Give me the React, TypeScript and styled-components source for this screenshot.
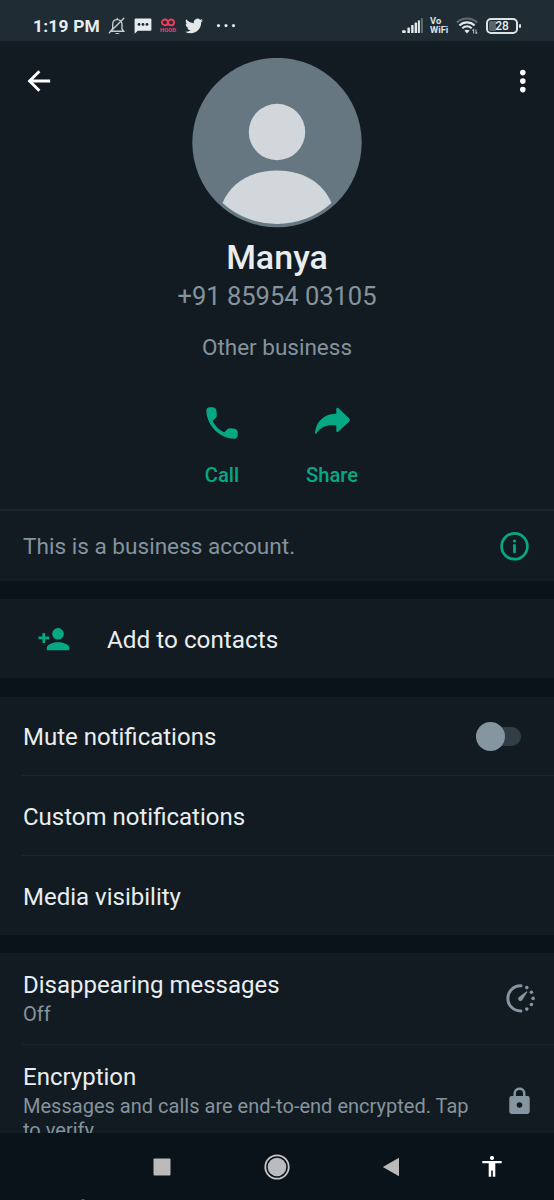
import React from "react";
import styled, { createGlobalStyle } from "styled-components";

const Global = createGlobalStyle`
  * { box-sizing: border-box; }
  html, body { margin: 0; padding: 0; background: #0b131a; }
  body { font-family: Roboto, "Liberation Sans", sans-serif; color: #e9edef; }
  svg { display: block; flex: none; }
`;

const Screen = styled.div`
  width: 554px;
  height: 1200px;
  overflow: hidden;
  display: flex;
  flex-direction: column;
  background: #0b131a;
`;

const StatusBar = styled.header`
  flex: none;
  height: 41px;
  padding: 10px 36px 0 33px;
  display: flex;
  align-items: center;
  background: #1f2c34;
`;

const Clock = styled.span`
  width: 68px;
  margin-right: 7px;
  font-size: 17.4px;
  line-height: 20px;
  font-weight: 700;
  letter-spacing: 0.2px;
  white-space: nowrap;
  color: #e8ecee;
`;

const StatusIcons = styled.div`
  display: flex;
  align-items: center;
  gap: 7.5px;
`;

const Hood = styled.span`
  width: 18px;
  display: flex;
  flex-direction: column;
  align-items: center;
  font-size: 5.8px;
  line-height: 6px;
  font-weight: 900;
  color: #e83e5c;
`;

const SystemIcons = styled(StatusIcons)`
  margin-left: auto;
  gap: 7px;
`;

const VoWifi = styled.span`
  width: 19px;
  font-size: 9.4px;
  line-height: 8.5px;
  font-weight: 700;
  white-space: nowrap;
  color: #dde2e5;
`;

const Battery = styled.span`
  width: 32px;
  height: 16px;
  margin-left: 1px;
  padding: 1px;
  border: 2px solid #dde2e5;
  border-radius: 5px;
  display: flex;
  align-items: center;
  justify-content: center;
  font-size: 12px;
  font-weight: 500;
  line-height: 10px;
  background: linear-gradient(90deg, #59646a 0 7px, transparent 7px) content-box;
  position: relative;
  &::after {
    content: "";
    position: absolute;
    right: -5px;
    top: 4px;
    width: 2px;
    height: 4px;
    border-radius: 1px;
    background: #dde2e5;
  }
`;

const Content = styled.main`
  flex: none;
  height: 1092px;
  overflow: hidden;
`;

const Profile = styled.section`
  height: 470px;
  display: grid;
  grid-template-columns: 78px 1fr 78px;
  background: #121b22;
  border-bottom: 2px solid #19232a;
`;

const IconButton = styled.button<{ $end?: boolean }>`
  height: 79px;
  padding: ${(p) => (p.$end ? "0 28px 0 0" : "0 0 0 27px")};
  display: flex;
  align-items: center;
  justify-content: ${(p) => (p.$end ? "flex-end" : "flex-start")};
  border: 0;
  background: none;
`;

const Identity = styled.div`
  padding-top: 17px;
  display: flex;
  flex-direction: column;
  align-items: center;
`;

const Name = styled.h1`
  margin: 9px 0 0;
  font-size: 34px;
  line-height: 40px;
  font-weight: 500;
`;

const Phone = styled.div`
  margin-top: 4px;
  font-size: 25.5px;
  line-height: 30px;
  color: #85939c;
`;

const Category = styled.div`
  margin-top: 22px;
  font-size: 22.5px;
  line-height: 28px;
  color: #85939c;
`;

const Actions = styled.div`
  margin-top: 40.5px;
  display: grid;
  grid-template-columns: 110px 110px;
`;

const Action = styled.button`
  padding: 0;
  border: 0;
  background: none;
  display: flex;
  flex-direction: column;
  align-items: center;
  gap: 19px;
  font: 500 20.2px/24px Roboto, sans-serif;
  color: #06a884;
`;

const Panel = styled.section<{ $gap?: number }>`
  margin-bottom: ${(p) => p.$gap ?? 18}px;
  background: #121b22;
`;

const Row = styled.div<{ $height: number; $divided?: boolean; $right?: number }>`
  height: ${(p) => p.$height}px;
  margin-left: ${(p) => (p.$divided ? 22 : 0)}px;
  padding: 2px ${(p) => p.$right ?? 0}px 0 ${(p) => (p.$divided ? 1 : 23)}px;
  border-top: ${(p) => (p.$divided ? "1px solid #1c262d" : "0")};
  display: flex;
  align-items: center;
  justify-content: space-between;
`;

const ContactRow = styled(Row)`
  justify-content: flex-start;
  gap: 37px;
  padding-left: 38px;
  font-size: 24.3px;
`;

const DetailRow = styled(Row)`
  align-items: flex-start;
  padding-top: 17px;
`;

const Label = styled.div`
  font-size: 24px;
  line-height: 30px;
  white-space: nowrap;
  ${ContactRow} & { font-size: inherit; }
`;

const Notice = styled(Label)`
  font-size: 22.6px;
  color: #85939c;
`;

const Detail = styled.div`
  margin-top: 2px;
  width: 452px;
  font-size: 20.05px;
  line-height: 24px;
  color: #85939c;
`;

const Toggle = styled.span`
  width: 45px;
  height: 29px;
  margin-bottom: 2px;
  display: flex;
  align-items: center;
  position: relative;
  &::before {
    content: "";
    position: absolute;
    right: 0;
    top: 5px;
    width: 35px;
    height: 19px;
    border-radius: 10px;
    background: #323e46;
  }
`;

const Knob = styled.span`
  position: relative;
  width: 29px;
  height: 29px;
  border-radius: 50%;
  background: #8696a0;
`;

const IconSlot = styled.span<{ $top: number }>`
  padding-top: ${(p) => p.$top}px;
`;

const NavBar = styled.nav`
  flex: none;
  height: 63px;
  padding: 4px 16px 0 105px;
  display: grid;
  grid-template-columns: 114px 116px 111px 1fr;
  align-items: center;
  justify-items: center;
`;

const NextLine = styled(Detail)`
  flex: none;
  height: 4px;
  margin: 0 0 0 23px;
  overflow: hidden;
`;

const muted = "#8696a0";
const green = "#06a884";

const Bell = () => (
  <svg width="18" height="18" viewBox="0 0 18 18" fill="none" stroke="#c4cacd" strokeWidth="1.4" strokeLinecap="round">
    <path d="M2.5 14.3H15.7L14 12V7.3C14 4.6 12.2 2.6 9.3 2.6S4.7 4.6 4.7 7.3V11.6L2.5 14.3M9.3 2.4V1.4M1.3 15.7L15.8 1.2" />
    <path d="M7 16h4.6c-.6 1.3-3.8 1.3-4.6 0Z" fill="#c4cacd" stroke="none" />
  </svg>
);

const Chat = () => (
  <svg width="18" height="17" viewBox="0 0 18 17">
    <path d="M1.6 1.4H16.4Q17.4 1.4 17.4 2.4V12.8Q17.4 13.8 16.4 13.8H3.8L.6 16.8V2.4Q.6 1.4 1.6 1.4Z" fill="#e8ecee" />
    <g fill="#1f2c34"><circle cx="5" cy="7.4" r="1.4" /><circle cx="9" cy="7.4" r="1.4" /><circle cx="13" cy="7.4" r="1.4" /></g>
  </svg>
);

const Twitter = () => (
  <svg width="18" height="18" viewBox="0 0 24 24" fill="#e2e7e9">
    <path d="M23.95 4.57a10 10 0 0 1-2.82.78 4.96 4.96 0 0 0 2.16-2.73c-.95.56-2 .96-3.13 1.19a4.92 4.92 0 0 0-8.38 4.48C7.69 8.1 4.07 6.13 1.64 3.16a4.82 4.82 0 0 0-.67 2.48c0 1.71.87 3.21 2.19 4.1a4.9 4.9 0 0 1-2.23-.62v.06a4.92 4.92 0 0 0 3.95 4.83 5 5 0 0 1-2.21.08 4.94 4.94 0 0 0 4.6 3.42A9.87 9.87 0 0 1 0 19.54a13.99 13.99 0 0 0 7.56 2.21c9.05 0 14-7.5 14-13.98 0-.21 0-.42-.02-.63a9.94 9.94 0 0 0 2.41-2.57Z" />
  </svg>
);

const Signal = () => (
  <svg width="21" height="15" viewBox="0 0 21 15" fill="#e2e7e9">
    <rect x="0" y="12.2" width="3.8" height="2.8" rx="1" /><rect x="5.4" y="9.5" width="2.5" height="5.5" rx=".6" />
    <rect x="9.1" y="7" width="2.5" height="8" rx=".6" /><rect x="12.6" y="4.5" width="2.5" height="10.5" rx=".6" />
    <rect x="15.9" y="2.2" width="2" height="12.8" rx=".6" /><rect x="18.9" y="0" width="2" height="15" rx=".6" fill="#626d73" />
  </svg>
);

const Wifi = () => (
  <svg width="22" height="17" viewBox="0 0 22 17" fill="none" strokeWidth="2.1">
    <path d="M.9 5.5C6.5.1 15.5.1 21.1 5.5" stroke="#626d73" />
    <path d="M3.4 8.4C7.8 4.3 14.2 4.3 18.6 8.4M6.3 11.3C9.2 8.8 12.8 8.8 15.7 11.3" stroke="#e2e7e9" />
    <path d="M8.4 13.6C10 12.3 12 12.3 13.6 13.6L11 16.4Z" fill="#e2e7e9" />
    <path d="M17.6 16.5V12.5L16.4 13.7M20 12.5V16.5L21.2 15.3" stroke="#aeb6ba" strokeWidth="1.1" />
  </svg>
);

const Avatar = () => (
  <svg width="170" height="170" viewBox="0 0 170 170">
    <circle cx="85" cy="84.6" r="84.7" fill="#667781" />
    <g fill="#d1d7db">
      <circle cx="85" cy="74" r="28.2" />
      <path d="M30.5 145C39 124 60 112.4 85 112.4S131 124 139.5 145A81.2 81.2 0 0 1 30.5 145Z" />
    </g>
  </svg>
);

export default function App() {
  return (
    <Screen>
      <Global />
      <StatusBar>
        <Clock>1:19 PM</Clock>
        <StatusIcons>
          <Bell />
          <Chat />
          <Hood>
            <svg width="14" height="9" viewBox="0 0 14 9" fill="none" stroke="#e83e5c" strokeWidth="1.9">
              <circle cx="3.9" cy="4.4" r="2.9" /><circle cx="10.1" cy="4.4" r="2.9" />
            </svg>
            HOOD
          </Hood>
          <Twitter />
          <svg width="32" height="4" viewBox="0 0 32 4" fill="#e2e7e9">
            <circle cx="8.5" cy="1.6" r="1.6" /><circle cx="16" cy="1.6" r="1.6" /><circle cx="23.5" cy="1.6" r="1.6" />
          </svg>
        </StatusIcons>
        <SystemIcons>
          <Signal />
          <VoWifi>Vo<br />WiFi</VoWifi>
          <Wifi />
          <Battery>28</Battery>
        </SystemIcons>
      </StatusBar>
      <Content>
        <Profile>
          <IconButton aria-label="Back">
            <svg width="24" height="24" viewBox="0 0 24 24" fill="none" stroke="#fff" strokeWidth="2.9">
              <path d="M23.2 12H3M12.4 2.2L2.6 12L12.4 21.8" />
            </svg>
          </IconButton>
          <Identity>
            <Avatar />
            <Name>Manya</Name>
            <Phone>+91 85954 03105</Phone>
            <Category>Other business</Category>
            <Actions>
              <Action>
                <svg width="42" height="42" viewBox="0 0 24 24" fill={green}>
                  <path d="M19.23 15.26l-2.54-.29c-.61-.07-1.21.14-1.64.57l-1.84 1.84c-2.83-1.44-5.15-3.75-6.59-6.59l1.85-1.85c.43-.43.64-1.03.57-1.64l-.29-2.52c-.12-1.01-.97-1.77-1.99-1.77H5.03c-1.13 0-2.07.94-2 2.07.53 8.54 7.36 15.36 15.89 15.89 1.13.07 2.07-.87 2.07-2v-1.73c.01-1.01-.75-1.86-1.76-1.98z" />
                </svg>
                Call
              </Action>
              <Action>
                <svg width="42" height="42" viewBox="-3 -4 42 42" fill={green}>
                  <path d="M22.3 2.8Q22.5 1 24.2 2L35.3 12.6Q36.6 14 35.3 15.4L24.2 25.7Q22.5 26.9 22.3 25V19.4C14 18.9 7.5 20 2.6 27.2Q1 28.8 1 27C2 17.5 8 8.2 22.3 7.8Z" />
                </svg>
                Share
              </Action>
            </Actions>
          </Identity>
          <IconButton $end aria-label="More options">
            <svg width="6" height="24" viewBox="0 0 6 24" fill="#fff">
              <circle cx="2.8" cy="3.6" r="2.8" /><circle cx="2.8" cy="12.1" r="2.8" /><circle cx="2.8" cy="20.6" r="2.8" />
            </svg>
          </IconButton>
        </Profile>
        <Panel>
          <Row $height={70} $right={25}>
            <Notice>This is a business account.</Notice>
            <svg width="29" height="30" viewBox="0 -1 29 30">
              <circle cx="14.5" cy="13.3" r="12.9" fill="none" stroke={green} strokeWidth="2.7" />
              <circle cx="14.5" cy="8" r="1.6" fill={green} />
              <rect x="13.1" y="11" width="2.8" height="9.3" rx="1.2" fill={green} />
            </svg>
          </Row>
        </Panel>
        <Panel $gap={19}>
          <ContactRow $height={79}>
            <svg width="32" height="24" viewBox="0 0 32 24" fill={green}>
              <circle cx="20" cy="5.8" r="5.8" />
              <path d="M8.8 22.3V20C8.8 16.2 15.5 14.3 20 14.3S31.4 16.2 31.4 20V22.3Z" />
              <path d="M5.8 4.9V14.9M.5 9.9H11.2" stroke={green} strokeWidth="2.7" />
            </svg>
            <Label>Add to contacts</Label>
          </ContactRow>
        </Panel>
        <Panel>
          <Row $height={78} $right={33}>
            <Label>Mute notifications</Label>
            <Toggle><Knob /></Toggle>
          </Row>
          <Row $height={80} $divided><Label>Custom notifications</Label></Row>
          <Row $height={80} $divided><Label>Media visibility</Label></Row>
        </Panel>
        <Panel>
          <DetailRow $height={91} $right={19}>
            <div>
              <Label>Disappearing messages</Label>
              <Detail>Off</Detail>
            </div>
            <IconSlot $top={14}>
              <svg width="29" height="29" viewBox="0 0 29 29" fill={muted}>
                <path d="M15 1.8H14.5A12.6 12.6 0 0 0 14.5 27H15" fill="none" stroke={muted} strokeWidth="3" strokeLinecap="round" />
                <path d="M13 12.9L20.3 7.4Q21.6 7 21.2 8.3L16.5 15.7A2.3 2.3 0 1 1 13 12.9Z" />
                <circle cx="20.8" cy="3.6" r="1.8" /><circle cx="25.4" cy="8.2" r="1.8" />
                <circle cx="27.1" cy="14.4" r="1.8" /><circle cx="25.4" cy="20.5" r="1.8" />
                <circle cx="20.8" cy="25.1" r="1.8" />
              </svg>
            </IconSlot>
          </DetailRow>
          <DetailRow $height={95} $divided $right={24}>
            <div>
              <Label>Encryption</Label>
              <Detail>Messages and calls are end-to-end encrypted. Tap to verify.</Detail>
            </div>
            <IconSlot $top={25}>
              <svg width="21" height="28" viewBox="0 0 21 28">
                <path d="M5.7 10V6.5C5.7.2 15.3.2 15.3 6.5V10" fill="none" stroke={muted} strokeWidth="2.5" />
                <path fillRule="evenodd" fill={muted} d="M2.7 9H18.3Q20.7 9 20.7 11.4V24.6Q20.7 27 18.3 27H2.7Q.3 27 .3 24.6V11.4Q.3 9 2.7 9ZM10.5 15.2A2.8 2.8 0 1 0 10.5 20.8A2.8 2.8 0 1 0 10.5 15.2Z" />
              </svg>
            </IconSlot>
          </DetailRow>
        </Panel>
      </Content>
      <NavBar>
        <svg width="18" height="18" viewBox="0 0 18 18"><rect x=".5" y=".5" width="17" height="17" rx="1" fill="#bababb" /></svg>
        <svg width="26" height="26" viewBox="0 0 26 26">
          <circle cx="13" cy="13" r="11.7" fill="none" stroke="#c6c7c8" strokeWidth="1.8" />
          <circle cx="13" cy="13" r="9.3" fill="#babbbc" />
        </svg>
        <svg width="18" height="20" viewBox="0 0 18 20"><path d="M.8 10L17 .8V19.2Z" fill="#bababb" /></svg>
        <svg width="20" height="22" viewBox="0 0 20 22" fill="#fff">
          <circle cx="10" cy="2" r="2.1" />
          <path d="M.3 5H19.7V7.2H13.3V20.7H10.8V14.5H9.2V20.7H6.7V7.2H.3Z" />
        </svg>
      </NavBar>
      <NextLine>to verify.</NextLine>
    </Screen>
  );
}
